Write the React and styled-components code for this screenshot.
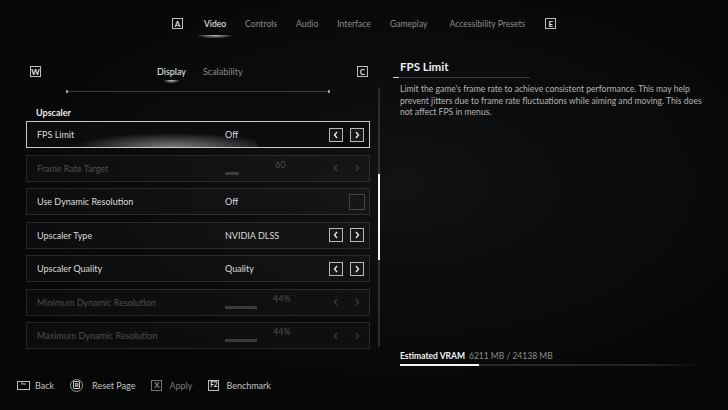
import React from 'react';
import styled, { createGlobalStyle, css } from 'styled-components';

const GlobalStyle = createGlobalStyle`
  html, body { margin: 0; padding: 0; background: #08090a; }
  body { font-family: Lato, "Noto Sans", sans-serif; color: #d8d8d8; }
  * { box-sizing: border-box; }
`;

const Screen = styled.div`
  width: 728px;
  height: 410px;
  overflow: hidden;
  display: flex;
  flex-direction: column;
  background: radial-gradient(ellipse 60% 55% at 55% 45%, #101214 0%, #0a0b0c 60%, #060707 100%);
`;

/* ---------- top tabs ---------- */

const TopNav = styled.div`
  height: 46px;
  display: flex;
  align-items: center;
  padding-left: 172px;
  padding-top: 1px;
`;

const KeyBox = styled.span`
  display: inline-flex;
  align-items: center;
  justify-content: center;
  width: ${p => p.w || 11}px;
  height: ${p => p.h || 11}px;
  border: 1px solid ${p => (p.dim ? '#777' : '#bdbdbd')};
  color: ${p => (p.dim ? '#888' : '#e0e0e0')};
  font-size: ${p => p.fs || 8}px;
  font-weight: ${p => (p.thin ? 400 : 700)};
  line-height: 1;
  flex-shrink: 0;
`;

const NavTab = styled.span`
  position: relative;
  font-size: 8.6px;
  margin-left: ${p => p.gap}px;
  color: ${p => (p.active ? '#f2f2f2' : '#8c8c8c')};
  ${p => p.active && css`
    &::after {
      content: '';
      position: absolute;
      left: -8px;
      right: -8px;
      top: 16px;
      height: 6px;
      background: radial-gradient(ellipse 50% 60% at 50% 0%, rgba(255,255,255,0.75), rgba(255,255,255,0) 100%);
    }
  `}
`;

/* ---------- main area ---------- */

const Main = styled.div`
  flex: 1;
  display: flex;
  padding-left: 26px;
`;

const LeftCol = styled.div`
  width: 344px;
  flex: none;
  display: flex;
  flex-direction: column;
  padding-top: 19px;
`;

const SubTabBar = styled.div`
  height: 13px;
  display: flex;
  align-items: center;
  padding: 0 2px 0 4px;
`;

const SubTab = styled.span`
  position: relative;
  font-size: 9px;
  color: ${p => (p.active ? '#ececec' : '#8a8a8a')};
  margin-left: ${p => p.gap}px;
  ${p => p.active && css`
    &::after {
      content: '';
      position: absolute;
      left: 6px;
      right: 6px;
      top: 14px;
      height: 5px;
      background: radial-gradient(ellipse 50% 70% at 50% 0%, rgba(255,255,255,0.8), rgba(255,255,255,0) 100%);
    }
  `}
`;

const Spacer = styled.div`
  flex: 1;
`;

const Divider = styled.div`
  position: relative;
  height: 1px;
  margin: 13px 40px 0 40px;
  background: #3a3b3c;
  &::before, &::after {
    content: '';
    position: absolute;
    top: -1px;
    width: 2px;
    height: 3px;
    background: #9a9a9a;
  }
  &::before { left: 0; }
  &::after { right: 0; }
`;

const SectionTitle = styled.div`
  margin-top: 16px;
  padding-left: 10px;
  font-size: 9px;
  font-weight: 700;
  line-height: 10px;
  color: #ededed;
`;

const RowList = styled.div`
  margin-top: 3px;
  display: flex;
  flex-direction: column;
  gap: 6.5px;
`;

const Row = styled.div`
  position: relative;
  height: 27px;
  display: flex;
  align-items: center;
  padding: 0 5px 0 10px;
  border: 1px solid ${p => (p.selected ? '#c9c9c9' : 'rgba(255,255,255,0.11)')};
  background: ${p => (p.selected ? '#0b0c0d' : 'rgba(255,255,255,0.025)')};
  overflow: hidden;
  ${p => p.selected && css`
    &::after {
      content: '';
      position: absolute;
      left: 30px;
      width: 200px;
      bottom: 0;
      height: 14px;
      background: radial-gradient(ellipse 50% 100% at 58% 100%, rgba(255,255,255,0.45), rgba(255,255,255,0) 100%);
      pointer-events: none;
    }
  `}
`;

const Label = styled.span`
  width: 188px;
  font-size: 9px;
  color: ${p => (p.disabled ? '#4f5051' : '#dcdcdc')};
`;

const Value = styled.span`
  flex: 1;
  font-size: 9px;
  color: ${p => (p.disabled ? '#505152' : '#dcdcdc')};
`;

const SliderValue = styled.div`
  flex: 1;
  position: relative;
  height: 100%;
`;

const SliderText = styled.span`
  position: absolute;
  left: ${p => p.at}px;
  top: 3px;
  font-size: 9px;
  color: #4c4d4e;
`;

const SliderBar = styled.div`
  position: absolute;
  left: 0;
  top: 16px;
  height: 3px;
  background: #3b3c3d;
`;

const Arrows = styled.div`
  display: flex;
  gap: 7px;
  opacity: ${p => (p.disabled ? 0.18 : 1)};
`;

const ArrowBox = styled.div`
  width: 14px;
  height: 14px;
  display: flex;
  align-items: center;
  justify-content: center;
  border: 1px solid ${p => (p.disabled ? 'transparent' : '#b8b8b8')};
  background: #17181a;
`;

const CheckBox = styled.div`
  width: 16px;
  height: 16px;
  border: 1px solid #444546;
  margin-right: -1px;
`;

const ScrollTrack = styled.div`
  position: relative;
  flex: none;
  width: 2px;
  height: 260px;
  margin: 41px 0 0 8px;
  background: linear-gradient(#2a2b2c, #333435, #2a2b2c);
  border-radius: 1px;
`;

const ScrollThumb = styled.div`
  position: absolute;
  left: 0;
  width: 2px;
  top: 87px;
  height: 86px;
  background: #f4f4f4;
`;

const RightCol = styled.div`
  flex: none;
  width: 318px;
  display: flex;
  flex-direction: column;
  margin-left: 13px;
  padding: 14px 0 6px 0;
`;

const InfoTitle = styled.div`
  padding-left: 7px;
  font-size: 11.5px;
  font-weight: 700;
  line-height: 13px;
  color: #f0f0f0;
`;

const InfoRule = styled.div`
  width: 137px;
  height: 1px;
  margin-top: 4px;
  background: linear-gradient(90deg, #d0d0d0 0 6px, #3a3b3c 6px);
`;

const InfoText = styled.p`
  margin: 6px 0 0 0;
  padding-left: 7px;
  font-size: 8.6px;
  line-height: 11.5px;
  color: #b4b4b4;
`;

const Vram = styled.div`
  margin-top: auto;
  padding-left: 7px;
`;

const VramLine = styled.div`
  font-size: 8.5px;
  line-height: 10px;
  color: #8e8e8e;
  b { color: #f2f2f2; font-weight: 700; margin-right: 4px; }
`;

const VramTrack = styled.div`
  margin-top: 3px;
  height: 2px;
  width: 308px;
  background: linear-gradient(90deg, #2c2d2e, #222324 80%, rgba(34,35,36,0));
`;

const VramFill = styled.div`
  height: 100%;
  background: #f4f4f4;
`;

/* ---------- footer ---------- */

const Footer = styled.div`
  height: 38px;
  display: flex;
  align-items: center;
  padding: 0 0 12px 17px;
`;

const Hint = styled.div`
  display: flex;
  align-items: center;
  gap: ${p => p.inner || 7}px;
  margin-right: ${p => p.gap}px;
  font-size: 9px;
  color: ${p => (p.dim ? '#7a7a7a' : '#c4c4c4')};
`;

const RoundKey = styled.span`
  width: 13px;
  height: 13px;
  border-radius: 50%;
  border: 1px solid #9a9a9a;
  display: flex;
  align-items: center;
  justify-content: center;
  span {
    width: 7px;
    height: 8px;
    border: 1px solid #cfcfcf;
    border-radius: 1px;
    font-size: 6px;
    font-weight: 700;
    line-height: 6px;
    text-align: center;
    color: #e6e6e6;
  }
`;

const Chevron = ({ dir }) => (
  <svg width="6" height="8" viewBox="0 0 6 8">
    <polyline
      points={dir === 'left' ? '4,1 1.5,4 4,7' : '2,1 4.5,4 2,7'}
      fill="none"
      stroke="#e8e8e8"
      strokeWidth="1.4"
    />
  </svg>
);

const Stepper = ({ disabled }) => (
  <Arrows disabled={disabled}>
    <ArrowBox disabled={disabled}><Chevron dir="left" /></ArrowBox>
    <ArrowBox disabled={disabled}><Chevron dir="right" /></ArrowBox>
  </Arrows>
);

const rows = [
  { label: 'FPS Limit', value: 'Off', kind: 'stepper', selected: true },
  { label: 'Frame Rate Target', value: '60', kind: 'slider', fill: 14, at: 50, disabled: true },
  { label: 'Use Dynamic Resolution', value: 'Off', kind: 'check' },
  { label: 'Upscaler Type', value: 'NVIDIA DLSS', kind: 'stepper' },
  { label: 'Upscaler Quality', value: 'Quality', kind: 'stepper' },
  { label: 'Minimum Dynamic Resolution', value: '44%', kind: 'slider', fill: 32, at: 48, disabled: true },
  { label: 'Maximum Dynamic Resolution', value: '44%', kind: 'slider', fill: 32, at: 48, disabled: true },
];

const navTabs = [
  { name: 'Video', gap: 21, active: true },
  { name: 'Controls', gap: 19 },
  { name: 'Audio', gap: 19 },
  { name: 'Interface', gap: 19 },
  { name: 'Gameplay', gap: 19 },
  { name: 'Accessibility Presets', gap: 22 },
];

export default function App() {
  return (
    <Screen>
      <GlobalStyle />
      <TopNav>
        <KeyBox>A</KeyBox>
        {navTabs.map(t => (
          <NavTab key={t.name} gap={t.gap} active={t.active}>{t.name}</NavTab>
        ))}
        <NavTab gap={20}><KeyBox>E</KeyBox></NavTab>
      </TopNav>

      <Main>
        <LeftCol>
          <SubTabBar>
            <KeyBox>W</KeyBox>
            <SubTab gap={116} active>Display</SubTab>
            <SubTab gap={17}>Scalability</SubTab>
            <Spacer />
            <KeyBox>C</KeyBox>
          </SubTabBar>
          <Divider />
          <SectionTitle>Upscaler</SectionTitle>
          <RowList>
            {rows.map(r => (
              <Row key={r.label} selected={r.selected}>
                <Label disabled={r.disabled}>{r.label}</Label>
                {r.kind === 'slider' ? (
                  <SliderValue>
                    <SliderText at={r.at}>{r.value}</SliderText>
                    <SliderBar style={{ width: r.fill }} />
                  </SliderValue>
                ) : (
                  <Value>{r.value}</Value>
                )}
                {r.kind === 'check' ? <CheckBox /> : <Stepper disabled={r.disabled} />}
              </Row>
            ))}
          </RowList>
        </LeftCol>

        <ScrollTrack>
          <ScrollThumb />
        </ScrollTrack>

        <RightCol>
          <InfoTitle>FPS Limit</InfoTitle>
          <InfoRule />
          <InfoText>
            Limit the game's frame rate to achieve consistent performance. This may help
            prevent jitters due to frame rate fluctuations while aiming and moving. This does
            not affect FPS in menus.
          </InfoText>
          <Vram>
            <VramLine><b>Estimated VRAM</b>6211 MB / 24138 MB</VramLine>
            <VramTrack>
              <VramFill style={{ width: `${(6211 / 24138) * 100}%` }} />
            </VramTrack>
          </Vram>
        </RightCol>
      </Main>

      <Footer>
        <Hint gap={16} inner={5}>
          <KeyBox w={13} h={9} fs={3.5} thin>Esc</KeyBox>
          Back
        </Hint>
        <Hint gap={16} inner={9}>
          <RoundKey><span>R</span></RoundKey>
          Reset Page
        </Hint>
        <Hint gap={16} dim>
          <KeyBox dim>X</KeyBox>
          Apply
        </Hint>
        <Hint>
          <KeyBox fs={6.5}>F2</KeyBox>
          Benchmark
        </Hint>
      </Footer>
    </Screen>
  );
}
